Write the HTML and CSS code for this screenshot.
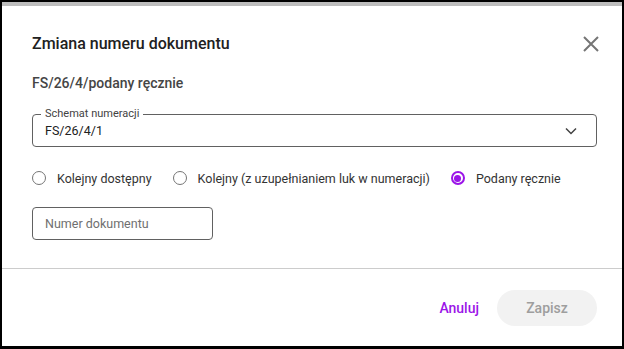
FILE: index.html
```html
<!DOCTYPE html>
<html lang="pl">

<head>
    <meta charset="UTF-8">
    <meta name="viewport" content="width=device-width, initial-scale=1.0">
    <title>Zmiana numeru dokumentu</title>
    <link rel="stylesheet" href="styles.css">
</head>

<body>

    <div class="dialog">
        <div class="dialog-header">
            <h2 class="dialog-title">Zmiana numeru dokumentu</h2>
            <button class="close-btn" aria-label="Zamknij">
                <svg width="16" height="16" viewBox="0 0 16 16">
                    <path d="M1 1 L15 15 M15 1 L1 15" stroke="#757575" stroke-width="2" fill="none"/>
                </svg>
            </button>
        </div>

        <div class="dialog-body">
            <div class="doc-number">FS/26/4/podany ręcznie</div>

            <div class="select-field">
                <span class="field-label">Schemat numeracji</span>
                <span class="select-value">FS/26/4/1</span>
                <svg class="chevron" width="12" height="8" viewBox="0 0 12 8">
                    <path d="M1 1.5 L6 6.5 L11 1.5" stroke="#424242" stroke-width="1.5" fill="none"/>
                </svg>
            </div>

            <div class="radio-row">
                <label class="radio">
                    <span class="radio-dot"></span>
                    Kolejny dostępny
                </label>
                <label class="radio">
                    <span class="radio-dot"></span>
                    Kolejny (z uzupełnianiem luk w numeracji)
                </label>
                <label class="radio checked">
                    <span class="radio-dot"></span>
                    Podany ręcznie
                </label>
            </div>

            <input class="text-input" type="text" placeholder="Numer dokumentu">
        </div>

        <div class="dialog-footer">
            <button class="btn-cancel">Anuluj</button>
            <button class="btn-save" disabled>Zapisz</button>
        </div>
    </div>

</body>

</html>
```

FILE: styles.css
```css
body {
    margin: 0;
    padding: 0;
    background-color: #000;
    font-family: Roboto, "Noto Sans", sans-serif;
}

.dialog {
    margin: 2px 2px 3px 2px;
    height: 340px;
    background-color: #fff;
    border-top: 4px solid #bdbdbd;
    display: flex;
    flex-direction: column;
}

.dialog-header {
    display: flex;
    align-items: center;
    justify-content: space-between;
    padding: 26px 19px 0 30px;
}

.dialog-title {
    margin: 0;
    font-size: 16px;
    font-weight: 500;
    line-height: 24px;
    color: #212121;
}

.close-btn {
    width: 24px;
    height: 24px;
    padding: 0;
    border: none;
    background: none;
    display: flex;
    align-items: center;
    justify-content: center;
    cursor: pointer;
}

.dialog-body {
    display: flex;
    flex-direction: column;
    align-items: flex-start;
    padding: 17px 25px 28px 30px;
    border-bottom: 1px solid #cccccc;
}

.doc-number {
    font-size: 14px;
    font-weight: 500;
    line-height: 20px;
    color: #454545;
}

.select-field {
    position: relative;
    align-self: stretch;
    box-sizing: border-box;
    margin-top: 21px;
    height: 33px;
    border: 1px solid #616161;
    border-radius: 4px;
    display: flex;
    align-items: center;
    justify-content: space-between;
    padding: 0 19px 0 12px;
}

.field-label {
    position: absolute;
    top: -7px;
    left: 8px;
    padding: 0 4px;
    background-color: #fff;
    font-size: 11px;
    line-height: 12px;
    color: #424242;
}

.select-value {
    font-size: 12.5px;
    color: #212121;
}

.radio-row {
    display: flex;
    align-items: center;
    gap: 21px;
    margin-top: 21px;
    height: 20px;
}

.radio {
    display: flex;
    align-items: center;
    gap: 11px;
    font-size: 12.5px;
    color: #333;
}

.radio-dot {
    width: 14px;
    height: 14px;
    box-sizing: border-box;
    border: 1.5px solid #757575;
    border-radius: 50%;
    display: flex;
    align-items: center;
    justify-content: center;
}

.radio.checked .radio-dot {
    border: 2px solid #9b14e8;
}

.radio.checked .radio-dot::after {
    content: "";
    width: 7px;
    height: 7px;
    border-radius: 50%;
    background-color: #9b14e8;
}

.text-input {
    margin-top: 19px;
    width: 181px;
    height: 33px;
    box-sizing: border-box;
    border: 1px solid #616161;
    border-radius: 4px;
    padding: 0 12px;
    font-family: Roboto, sans-serif;
    font-size: 12.5px;
}

.text-input::placeholder {
    color: #6f6f6f;
}

.dialog-footer {
    display: flex;
    align-items: center;
    justify-content: flex-end;
    gap: 18px;
    padding: 21px 25px 0 30px;
}

.btn-cancel {
    border: none;
    background: none;
    padding: 0;
    font-family: Roboto, sans-serif;
    font-size: 14px;
    font-weight: 500;
    color: #9b14e8;
    cursor: pointer;
}

.btn-save {
    width: 100px;
    height: 36px;
    border: none;
    border-radius: 18px;
    background-color: #f2f2f2;
    font-family: Roboto, sans-serif;
    font-size: 14px;
    font-weight: 500;
    color: #9e9e9e;
}
```
